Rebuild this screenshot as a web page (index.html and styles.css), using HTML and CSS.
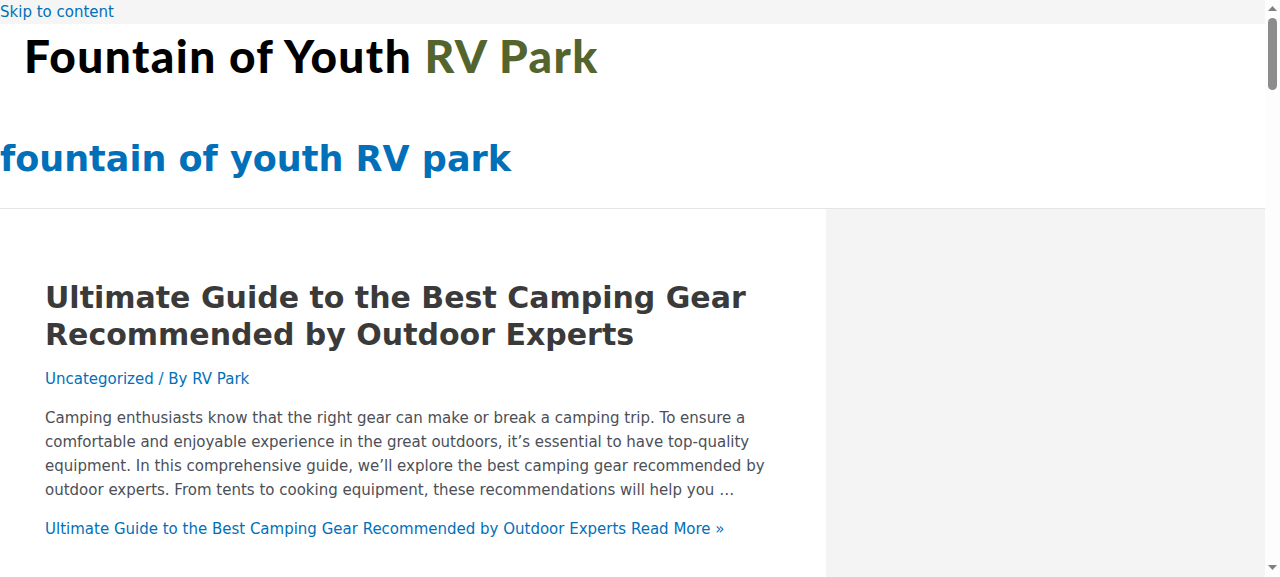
FILE: index.html
```html
<!DOCTYPE html>
<html lang="en">
<head>
<meta charset="utf-8">
<title>fountain of youth RV park</title>
<link rel="stylesheet" href="styles.css">
</head>
<body>
<a class="skip-link" href="#content">Skip to content</a>
<header class="site-header">
  <a class="logo" href="#"><span class="logo-dark">Fountain of Youth</span> <span class="logo-green">RV Park</span></a>
  <h1 class="site-title"><a href="#">fountain of youth RV park</a></h1>
</header>
<div class="site-content" id="content">
  <main class="primary">
    <article class="post">
      <h2 class="post-title">Ultimate Guide to the Best Camping Gear Recommended by Outdoor Experts</h2>
      <p class="post-meta"><a href="#">Uncategorized</a> / By <a href="#">RV Park</a></p>
      <p class="post-excerpt">Camping enthusiasts know that the right gear can make or break a camping trip. To ensure a comfortable and enjoyable experience in the great outdoors, it’s essential to have top-quality equipment. In this comprehensive guide, we’ll explore the best camping gear recommended by outdoor experts. From tents to cooking equipment, these recommendations will help you …</p>
      <p class="read-more"><a href="#">Ultimate Guide to the Best Camping Gear Recommended by Outdoor Experts Read More »</a></p>
    </article>
  </main>
  <aside class="sidebar"></aside>
</div>
<div class="scrollbar" aria-hidden="true">
  <svg class="arrow" width="15" height="15" viewBox="0 0 15 15"><path d="M3 11 L7.5 6 L12 11 Z"/></svg>
  <div class="track"><div class="thumb"></div></div>
  <svg class="arrow" width="15" height="15" viewBox="0 0 15 15"><path d="M3 3 L12 3 L7.5 8 Z"/></svg>
</div>
</body>
</html>
```
FILE: styles.css
```css
* { box-sizing: border-box; }
html, body { margin: 0; padding: 0; }
body {
  background: #f5f5f5;
  color: #3a3a3a;
  font-family: "DejaVu Sans", sans-serif;
  font-size: 15px;
  line-height: 24px;
  padding-right: 15px;
}
a { color: #0170b9; text-decoration: none; }
.skip-link { display: block; height: 24px; line-height: 24px; }
.site-header {
  background: #fff;
  height: 185px;
  border-bottom: 1px solid #e5e5e5;
}
.logo {
  display: block;
  height: 111px;
  padding: 5px 0 0 24px;
  font-family: "Lato", sans-serif;
  font-weight: 900;
  font-size: 46px;
  line-height: 54px;
  letter-spacing: 1.42px;
  white-space: nowrap;
}
.logo-dark { color: #000; }
.logo-green { color: #53642c; }
.site-title {
  margin: 0;
  font-size: 35px;
  line-height: 48px;
  font-weight: 700;
}
.site-content { display: flex; min-height: 4127px; }
.primary { width: 826px; background: #fff; padding: 71px 45px 0; }
.sidebar { flex: 1; background: #f4f4f4; }
.post-title {
  margin: 0 0 14px;
  font-size: 30px;
  line-height: 36.5px;
  font-weight: 700;
  color: #3a3a3a;
}
.post-meta { margin: 0 0 15px; color: #0170b9; }
.post-excerpt { margin: 0 0 15px; color: #4b4f58; }
.read-more { margin: 0; }
.scrollbar {
  position: fixed;
  top: 0;
  right: 0;
  bottom: 0;
  width: 15px;
  background: #fdfdfd;
  display: flex;
  flex-direction: column;
}
.arrow { flex: none; fill: #808080; }
.track { flex: 1; padding: 3px 3px 0; }
.thumb { height: 72px; border-radius: 5px; background: #8c8c8c; }
```
